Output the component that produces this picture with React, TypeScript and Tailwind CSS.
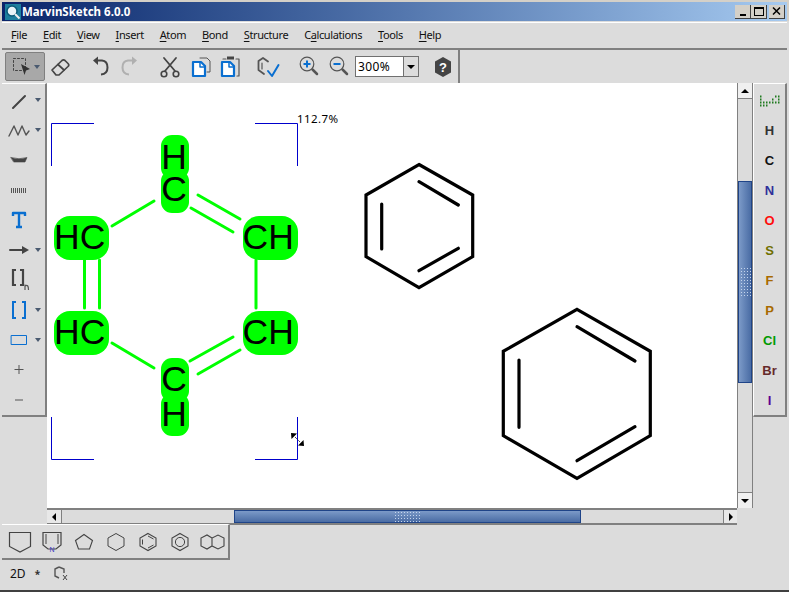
import type { ReactNode } from "react";

const menus: [string, string, string][] = [
  ["", "F", "ile"],
  ["", "E", "dit"],
  ["", "V", "iew"],
  ["", "I", "nsert"],
  ["", "A", "tom"],
  ["", "B", "ond"],
  ["", "S", "tructure"],
  ["C", "a", "lculations"],
  ["", "T", "ools"],
  ["", "H", "elp"],
];

const elements = [
  { label: "H", color: "text-[#333333]" },
  { label: "C", color: "text-[#111111]" },
  { label: "N", color: "text-[#30309a]" },
  { label: "O", color: "text-[#ff0d0d]" },
  { label: "S", color: "text-[#6f6f00]" },
  { label: "F", color: "text-[#a86a00]" },
  { label: "P", color: "text-[#a86a00]" },
  { label: "Cl", color: "text-[#009a00]" },
  { label: "Br", color: "text-[#662a2a]" },
  { label: "I", color: "text-[#5c0090]" },
];

function Ico({ children, w = 24, h = 24 }: { children: ReactNode; w?: number; h?: number }) {
  return (
    <svg width={w} height={h} viewBox={`0 0 ${w} ${h}`} fill="none" strokeLinecap="round" strokeLinejoin="round">
      {children}
    </svg>
  );
}

function Caret() {
  return <span className="absolute right-[4px] top-1/2 -mt-[2px] w-0 h-0 border-x-[3px] border-x-transparent border-t-[4px] border-t-[#4a5a70]" />;
}

const hex = "M20 8.5L28 13V21L20 25.5L12 21V13Z";

const leftTools: { icon: ReactNode; caret?: boolean }[] = [
  {
    caret: true,
    icon: <Ico><path d="M6 20 L18 8" stroke="#444" strokeWidth="2" /></Ico>,
  },
  {
    caret: true,
    icon: <Ico><path d="M2 18 L7 8 L11 17 L15 8 L19 17 L22 13" stroke="#555" strokeWidth="1.4" /></Ico>,
  },
  {
    icon: <Ico><path d="M4 9.5 Q12 12 20 9.5 L18 14 L7 14 Z" fill="#444" stroke="#444" strokeWidth="0.6" /></Ico>,
  },
  {
    icon: <Ico><path d="M4.5 10v5M6.5 10v5M8.5 10v5M10.5 10v5M12.5 10v5M14.5 10v5M16.5 10v5M18.5 10v5" stroke="#555" strokeWidth="1" strokeLinecap="butt" /></Ico>,
  },
  {
    icon: <Ico><path d="M6 8V5H18V8M12 5V19M9 19H15" stroke="#0a6fd0" strokeWidth="2.4" strokeLinecap="butt" /></Ico>,
  },
  {
    caret: true,
    icon: <Ico><path d="M3 12H17" stroke="#444" strokeWidth="2" /><path d="M15 8L22 12L15 16Z" fill="#444" /></Ico>,
  },
  {
    icon: (
      <Ico w={30}>
        <path d="M9 2H6V17H9M13 2H16V17H13" stroke="#444" strokeWidth="2.2" strokeLinecap="butt" strokeLinejoin="miter" />
        <path d="M18 22V16.5M18 18Q21.5 15.5 21.5 22" stroke="#555" strokeWidth="1.2" strokeLinecap="butt" />
      </Ico>
    ),
  },
  {
    caret: true,
    icon: <Ico><path d="M9 4H6V20H9M15 4H18V20H15" stroke="#0a6fd0" strokeWidth="2" strokeLinecap="butt" strokeLinejoin="miter" /></Ico>,
  },
  {
    caret: true,
    icon: <Ico><rect x="4.5" y="7.5" width="15" height="9" stroke="#0a6fd0" strokeWidth="1" /></Ico>,
  },
  {
    icon: <Ico><path d="M12 7V16M7.5 11.5H16.5" stroke="#555" strokeWidth="1" strokeLinecap="butt" /></Ico>,
  },
  {
    icon: <Ico><path d="M8 12H16" stroke="#555" strokeWidth="1" strokeLinecap="butt" /></Ico>,
  },
];

const rings: ReactNode[] = [
  <path key="a" d="M9.5 7.5H30.5V21.5L20 27L9.5 21.5Z" stroke="#444" strokeWidth="1.2" />,
  <g key="b"><path d="M11 7.5H29V20L24 24H16L11 20Z" stroke="#444" strokeWidth="1.2" /><path d="M14 9V19M26 9V19" stroke="#444" strokeWidth="1" /></g>,
  <path key="c" d="M20 9.5L28.5 15.5L25.5 24H14.5L11.5 15.5Z" stroke="#444" strokeWidth="1.1" />,
  <path key="d" d={hex} stroke="#444" strokeWidth="1" />,
  <g key="e"><path d={hex} stroke="#444" strokeWidth="1.1" /><path d="M20 11L25.5 14M14.5 14.5V19.5M20 23L25.5 20" stroke="#444" strokeWidth="1" /></g>,
  <g key="f"><path d={hex} stroke="#444" strokeWidth="1.1" /><circle cx="20" cy="17" r="4.6" stroke="#444" strokeWidth="1" /></g>,
  <g key="g"><path d="M20 13L15 10L9 13V21L15 24L20 21L26 24L32 21V13L26 10L20 13V21" stroke="#444" strokeWidth="1.1" /></g>,
];

function Molecules() {
  const mono = { fontFamily: "'Liberation Sans', Arial, sans-serif", fontSize: 35.5, fill: "#000" };
  return (
    <svg className="block" width="689" height="425" viewBox="47 83 689 425">
      {/* selection brackets */}
      <path
        d="M94 123.5H51.5V166M255 123.5H297.5V166M51.5 417V459.5H94M297.5 417V459.5H255"
        stroke="#0000cc"
        strokeWidth="1"
        fill="none"
      />
      <text x="297" y="123" fontFamily="'Noto Sans', sans-serif" fontSize="11.5" letterSpacing="0.4" fill="#000">
        112.7%
      </text>

      {/* highlighted bonds */}
      <g stroke="#00ff00" strokeWidth="3" strokeLinecap="round">
        <path d="M112 226L154 201M198 195L240 219M191 208L233 232" />
        <path d="M84.5 260V308M99.5 260V308M256 260V308" />
        <path d="M112 343L154 368M190 361L233 337M198 374L240 350" />
      </g>

      {/* highlighted atoms */}
      <g fill="#00ff00">
        <rect x="161" y="135" width="28" height="44" rx="11" />
        <rect x="161" y="170" width="28" height="43" rx="11" />
        <rect x="54" y="216" width="55" height="44" rx="16" />
        <rect x="243" y="216" width="55" height="44" rx="16" />
        <rect x="54" y="311" width="55" height="44" rx="16" />
        <rect x="243" y="311" width="55" height="44" rx="16" />
        <rect x="161" y="358" width="28" height="44" rx="11" />
        <rect x="161" y="393" width="28" height="43" rx="11" />
      </g>
      <text {...mono} x="174" y="169" textAnchor="middle">H</text>
      <text {...mono} x="174" y="201" textAnchor="middle">C</text>
      <text {...mono} x="54" y="249">HC</text>
      <text {...mono} x="242.5" y="249">CH</text>
      <text {...mono} x="54" y="344">HC</text>
      <text {...mono} x="242.5" y="344">CH</text>
      <text {...mono} x="174" y="391" textAnchor="middle">C</text>
      <text {...mono} x="174" y="425.5" textAnchor="middle">H</text>

      {/* plain rings */}
      <g stroke="#000" fill="none" strokeWidth="3.2" strokeLinejoin="miter">
        <path d="M419 164.5L472.7 195V256.7L419 287.7L366 256.7V195Z" />
        <path d="M419 181.7L458.3 205M381.7 204V249M419 270.7L458.3 248.3" strokeLinecap="round" />
        <path d="M577 309.3L650.3 351.3V435.7L577 478.3L503.3 435.7V351.3Z" />
        <path d="M577 326.7L635 361M519 360V427.3M577 460.7L635 426.7" strokeLinecap="round" />
      </g>

      {/* resize cursor */}
      <path d="M295 437L300 442" stroke="#000" strokeWidth="1" strokeDasharray="1 1" />
      <path d="M291 433L297 433.5L291.5 439ZM304 446L298 445.5L303.5 440Z" fill="#000" />
    </svg>
  );
}

function ScrollDots({ className }: { className: string }) {
  return (
    <div className={`bg-[radial-gradient(#c4d4ec_0.7px,transparent_0.8px)] bg-[length:3px_3px] ${className}`} />
  );
}

function ToolBtn({ children, className = "w-[30px]" }: { children: ReactNode; className?: string }) {
  return <div className={`h-[28px] flex items-center justify-center shrink-0 ${className}`}>{children}</div>;
}

export default function App() {
  return (
    <div className="w-[789px] h-[592px] overflow-hidden bg-[#dcdcdc] flex flex-col font-['Noto_Sans','Liberation_Sans',sans-serif] text-black">
      {/* window frame + title */}
      <div className="px-[2px] pt-[2px] bg-[#d4d0c8] shrink-0">
        <div className="h-[19px] flex items-center pl-[3px] pr-[2px] bg-gradient-to-r from-[#0a246a] to-[#a6caf0]">
          <svg width="16" height="16" viewBox="0 0 16 16" className="shrink-0">
            <rect width="16" height="16" fill="#1d7f9e" />
            <circle cx="7" cy="7" r="5" fill="#e8f4f8" stroke="#0a5a78" strokeWidth="1.5" />
            <path d="M10 10L14.5 14.5" stroke="#f0f0f0" strokeWidth="2" />
          </svg>
          <span className="ml-[1px] text-[11.5px] leading-none font-bold text-white">MarvinSketch 6.0.0</span>
          <div className="ml-auto flex">
            <div className="w-[16px] h-[14px] bg-[#d4d0c8] border-r border-b border-[#404040] flex items-end justify-center pb-[2px]">
              <span className="w-[6px] h-[2px] bg-black" />
            </div>
            <div className="w-[16px] h-[14px] bg-[#d4d0c8] border-r border-b border-[#404040] flex items-center justify-center">
              <span className="w-[10px] h-[9px] border border-black border-t-2" />
            </div>
            <div className="ml-[2px] w-[16px] h-[14px] bg-[#d4d0c8] border-r border-b border-[#404040] flex items-center justify-center">
              <svg width="9" height="8" viewBox="0 0 9 8"><path d="M1 0.5L8 7.5M8 0.5L1 7.5" stroke="#000" strokeWidth="1.5" /></svg>
            </div>
          </div>
        </div>
      </div>

      <div className="flex-1 flex flex-col mx-[2px] min-h-0">
        {/* menu bar */}
        <div className="h-[28px] mt-[1px] pb-[2px] shrink-0 border-t border-t-white border-b-2 border-b-[#808080] flex items-center pl-[9px] gap-[16px] text-[11px] tracking-[-0.4px] text-[#111]">
          {menus.map(([pre, key, rest]) => (
            <span key={key + rest} className="leading-none">
              {pre}
              <span className="underline underline-offset-2">{key}</span>
              {rest}
            </span>
          ))}
        </div>

        {/* main toolbar */}
        <div className="h-[33px] w-[458px] shrink-0 border-r-2 border-[#808080] flex items-center pl-[3px]">
          <div className="relative w-[40px] h-[29px] shrink-0 rounded-[2px] bg-[#a8a8a8] border border-[#808080] flex items-center pl-[5px]">
            <Ico>
              <rect x="2.5" y="3.5" width="12" height="12" stroke="#444" strokeWidth="1" strokeDasharray="2 2" />
              <path d="M10 9L19 14L15 15.5L13.5 20Z" fill="#333" />
            </Ico>
            <Caret />
          </div>
          <ToolBtn>
            <Ico>
              <path d="M4 15L14 5.5Q15.5 4.2 17 5.5L20 8.5Q21.5 10 20 11.5L11 20H8Z" stroke="#444" strokeWidth="1.7" />
              <path d="M10 9.5L16 15" stroke="#444" strokeWidth="1.7" />
            </Ico>
          </ToolBtn>
          <div className="w-[10px] shrink-0" />
          <ToolBtn>
            <Ico>
              <path d="M8 5.5H14Q19.5 6 19.5 12.5Q19.5 19 13 19.5" stroke="#444" strokeWidth="2" strokeLinecap="butt" />
              <path d="M10 1.5L5 5.5L10 10Z" fill="#444" />
            </Ico>
          </ToolBtn>
          <ToolBtn>
            <Ico>
              <path d="M16 5.5H10Q4.5 6 4.5 12.5Q4.5 19 11 19.5" stroke="#b0b0b0" strokeWidth="2" strokeLinecap="butt" />
              <path d="M14 1.5L19 5.5L14 10Z" fill="#b0b0b0" />
            </Ico>
          </ToolBtn>
          <div className="w-[10px] shrink-0" />
          <ToolBtn>
            <Ico>
              <path d="M6 3L17 16M18 3L7 16" stroke="#444" strokeWidth="1.8" />
              <circle cx="6" cy="19" r="2.8" stroke="#444" strokeWidth="1.6" />
              <circle cx="18" cy="19" r="2.8" stroke="#444" strokeWidth="1.6" />
            </Ico>
          </ToolBtn>
          <ToolBtn>
            <Ico>
              <path d="M12 3H19L22 6V17H19" stroke="#555" strokeWidth="1" />
              <path d="M5 7H13L17 11V21H5Z" fill="#fff" stroke="#0a6fd0" strokeWidth="2.2" />
              <path d="M12 7V12H17" stroke="#0a6fd0" strokeWidth="1.5" />
            </Ico>
          </ToolBtn>
          <ToolBtn className="w-[29px]">
            <Ico>
              <path d="M18 4H21V21H19" stroke="#555" strokeWidth="1.2" />
              <path d="M5 4H8" stroke="#555" strokeWidth="1.2" />
              <rect x="9" y="1.5" width="7" height="3" fill="#444" />
              <path d="M4 7H12L16 11V21H4Z" fill="#fff" stroke="#0a6fd0" strokeWidth="2.2" />
              <path d="M11 7V12H16" stroke="#0a6fd0" strokeWidth="1.5" />
            </Ico>
          </ToolBtn>
          <div className="w-[10px] shrink-0" />
          <ToolBtn>
            <Ico>
              <path d="M11 6.5L6 3L1.5 6V15L7 19" stroke="#555" strokeWidth="1.8" />
              <path d="M5 8V14" stroke="#555" strokeWidth="1.2" />
              <path d="M11 16L15 21L21.5 10" stroke="#0a6fd0" strokeWidth="2" />
            </Ico>
          </ToolBtn>
          <div className="w-[10px] shrink-0" />
          <ToolBtn>
            <Ico>
              <circle cx="10" cy="9" r="6.8" stroke="#555" strokeWidth="1.2" />
              <path d="M6.5 9H13.5M10 5.5V12.5" stroke="#0a6fd0" strokeWidth="2" strokeLinecap="butt" />
              <path d="M15.5 14.5L20 19" stroke="#555" strokeWidth="2.5" />
            </Ico>
          </ToolBtn>
          <ToolBtn>
            <Ico>
              <circle cx="10" cy="9" r="6.8" stroke="#555" strokeWidth="1.2" />
              <path d="M6.5 9H13.5" stroke="#0a6fd0" strokeWidth="2" strokeLinecap="butt" />
              <path d="M15.5 14.5L20 19" stroke="#555" strokeWidth="2.5" />
            </Ico>
          </ToolBtn>
          <div className="ml-[1px] w-[64px] h-[21px] shrink-0 flex border border-[#707070] bg-white">
            <span className="flex-1 pl-[2px] text-[12px] leading-[19px] tracking-[0.4px]">300%</span>
            <span className="w-[15px] bg-[#dcdcdc] border-l border-[#707070] flex items-center justify-center">
              <span className="w-0 h-0 border-x-[4px] border-x-transparent border-t-[4px] border-t-black" />
            </span>
          </div>
          <div className="w-[9px] shrink-0" />
          <ToolBtn>
            <svg width="20" height="22" viewBox="0 0 20 22">
              <path d="M10 1L18 5.5V16.5L10 21L2 16.5V5.5Z" fill="#444" />
              <text x="10" y="16" textAnchor="middle" fontSize="13" fontWeight="700" fontFamily="'Liberation Sans', sans-serif" fill="#fff">?</text>
            </svg>
          </ToolBtn>
        </div>

        {/* middle: tools, canvas, scrollbars, element palette */}
        <div className="flex shrink-0 h-[442px]">
          <div className="w-[45px] shrink-0">
            <div className="h-[334px] border-t border-t-white border-r-2 border-r-[#808080] border-b-2 border-b-[#808080] flex flex-col pt-[1px]">
              {leftTools.map((tool, i) => (
                <div key={i} className="relative h-[30px] shrink-0 flex items-center pl-[5px]">
                  {tool.icon}
                  {tool.caret && <Caret />}
                </div>
              ))}
            </div>
          </div>

          <div className="w-[690px] shrink-0 flex flex-col">
            <div className="h-[425px] bg-white overflow-hidden shrink-0">
              <Molecules />
            </div>
            {/* horizontal scrollbar */}
            <div className="h-[17px] flex border-y-2 border-[#808080] bg-[#dcdcdc]">
              <div className="w-[15px] bg-[#e8e8e8] border-r border-[#808080] flex items-center justify-center">
                <span className="w-0 h-0 border-y-[4px] border-y-transparent border-r-[4px] border-r-black" />
              </div>
              <div className="w-[172px]" />
              <div className="w-[347px] border border-[#1f4488] bg-gradient-to-b from-[#7c9ac8] to-[#4a6ca4] flex items-center justify-center">
                <ScrollDots className="w-[27px] h-[11px]" />
              </div>
              <div className="flex-1" />
              <div className="w-[14px] bg-[#e8e8e8] border-l border-[#808080] flex items-center justify-center">
                <span className="w-0 h-0 border-y-[4px] border-y-transparent border-l-[4px] border-l-black" />
              </div>
            </div>
          </div>

          {/* vertical scrollbar */}
          <div className="w-[16px] h-[425px] shrink-0 flex flex-col border-x border-[#808080] bg-[#dcdcdc]">
            <div className="h-[16px] bg-[#f0f0f0] border-b border-[#808080] flex items-center justify-center">
              <span className="w-0 h-0 border-x-[4px] border-x-transparent border-b-[4px] border-b-black" />
            </div>
            <div className="h-[82px]" />
            <div className="h-[202px] border border-[#1f4488] bg-gradient-to-r from-[#7c9ac8] to-[#4a6ca4] flex items-center justify-center">
              <ScrollDots className="w-[11px] h-[30px]" />
            </div>
            <div className="flex-1" />
            <div className="h-[16px] bg-[#f0f0f0] border-t border-[#808080] flex items-center justify-center">
              <span className="w-0 h-0 border-x-[4px] border-x-transparent border-t-[4px] border-t-black" />
            </div>
          </div>

          <div className="w-[34px] shrink-0">
            <div className="h-[334px] border-l border-l-white border-t border-t-white border-b-2 border-b-[#808080] border-r-2 border-r-[#808080] flex flex-col items-center">
              <div className="h-[31px] shrink-0 flex items-start justify-center pt-[11px]">
                <svg width="22" height="12" viewBox="0 0 22 12">
                  <path d="M1 1.5h1.5M1 4.5h1.5M1 7.5h1.5M1 10.5h1.5M4 7.5h1.5M4 10.5h1.5M7 7.5h1.5M7 10.5h1.5M10 7.5h1.5M13 4.5h1.5M13 7.5h1.5M16 1.5h1.5M16 7.5h1.5M19 1.5h1.5M19 4.5h1.5M19 7.5h1.5" stroke="#1f7a1f" strokeWidth="2" />
                </svg>
              </div>
              {elements.map((el) => (
                <div
                  key={el.label}
                  className={`h-[30px] shrink-0 flex items-center justify-center text-[13px] font-bold leading-none font-['Liberation_Sans',sans-serif] ${el.color}`}
                >
                  {el.label}
                </div>
              ))}
            </div>
          </div>
        </div>

        {/* ring templates */}
        <div className="w-[228px] h-[36px] -mt-[1px] pl-[2px] shrink-0 border-t border-t-white border-r-2 border-r-[#808080] border-b-2 border-b-[#808080] flex items-center">
          {rings.map((r, i) => (
            <svg key={i} width="32" height="34" viewBox="4 0 32 34" fill="none" className="shrink-0">
              {r}
              {i === 1 && (
                <text x="20" y="27" textAnchor="middle" fontSize="7" fill="#3a3ac0" fontFamily="'Liberation Sans', sans-serif">N</text>
              )}
            </svg>
          ))}
        </div>

        {/* status */}
        <div className="flex-1 flex items-center pl-[8px] text-[12px] text-[#111] pb-[2px]">
          <span className="leading-none">2D</span>
          <span className="ml-[9px] text-[10px] font-bold leading-none text-[#333]">*</span>
          <svg width="18" height="18" viewBox="0 0 18 18" className="ml-[13px]" fill="none">
            <path d="M6 2L11 4V8M6 2L2 4V11L6 13" stroke="#555" strokeWidth="1.4" />
            <path d="M10 10L14 15M14 10L10 15" stroke="#444" strokeWidth="1" />
          </svg>
        </div>
      </div>
      <div className="h-[2px] shrink-0 bg-[#404040]" />
    </div>
  );
}
